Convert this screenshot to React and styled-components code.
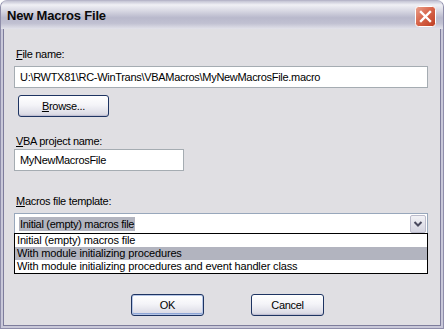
import React from 'react';
import styled, { createGlobalStyle } from 'styled-components';

const GlobalStyle = createGlobalStyle`
  body {
    margin: 0;
    background: #ffffff;
    font-family: "Liberation Sans", Arial, sans-serif;
  }
`;

const Window = styled.div`
  width: 444px;
  height: 329px;
  box-sizing: border-box;
  display: flex;
  flex-direction: column;
  background: #c9c8d9;
  border: 1px solid #8e8daa;
  border-top-color: #b7b6c9;
  border-radius: 7px 7px 0 0;
  overflow: hidden;
`;

const TitleBar = styled.div`
  height: 28px;
  flex: none;
  display: flex;
  align-items: center;
  justify-content: space-between;
  padding: 1px 6px 0 6px;
  box-sizing: border-box;
  background: linear-gradient(
    to bottom,
    #c4c4d4 0%,
    #f0f0f5 14%,
    #d8d8e3 35%,
    #b9b9cc 60%,
    #c1c1d2 80%,
    #e2e2ea 100%
  );
`;

const Title = styled.span`
  font-weight: bold;
  font-size: 13px;
  letter-spacing: -0.2px;
  color: #0a0a0a;
`;

const CloseButton = styled.div`
  width: 21px;
  height: 21px;
  margin-top: 2px;
  margin-right: 1px;
  display: flex;
`;

const Client = styled.div`
  flex: 1;
  margin: 0 2px 2px;
  border: 1px solid #7e7d9c;
  border-top: none;
  background: #e0dfe3;
  padding: 19px 10px 0;
  display: flex;
  flex-direction: column;
  font-size: 11px;
  letter-spacing: -0.3px;
  color: #000;
`;

const Label = styled.div`
  height: 13px;
  line-height: 13px;
  margin-top: ${p => p.$top || 0}px;
  margin-bottom: ${p => p.$gap}px;
  padding-left: 2px;
`;

const Key = styled.span`
  text-decoration: underline;
  text-underline-offset: 1px;
`;

const TextBox = styled.div`
  width: ${p => p.$width}px;
  height: 22px;
  box-sizing: border-box;
  border: 1px solid #a5acb2;
  background: #fff;
  padding-left: 5px;
  line-height: 20px;
  white-space: nowrap;
`;

const Button = styled.div`
  width: ${p => p.$width || 73}px;
  height: 22px;
  box-sizing: border-box;
  border: 1px solid #1e3462;
  border-radius: 3px;
  background: linear-gradient(to bottom, #ffffff 0%, #f4f4f8 45%, #dcdce6 90%, #c6c6d6 100%);
  box-shadow: ${p => p.$default
    ? 'inset 0 0 0 1px #b6c6e6, inset 0 -1px 0 1px #8ea6d6'
    : 'inset 0 -1px 0 #c0bfd2'};
  display: flex;
  align-items: center;
  justify-content: center;
  flex: none;
`;

const BrowseButton = styled(Button)`
  margin: 7px 0 0 4px;
`;

const ComboWrap = styled.div`
  position: relative;
  width: 414px;
`;

const Combo = styled.div`
  height: 21px;
  box-sizing: border-box;
  border: 1px solid #98a7bb;
  background: #fff;
  display: flex;
  align-items: center;
  justify-content: space-between;
  padding: 0 1px 0 4px;
`;

const Selected = styled.span`
  background: #b2b4bf;
  padding: 0 1px;
  line-height: 14px;
`;

const DropArrow = styled.div`
  width: 16px;
  height: 18px;
  box-sizing: border-box;
  border: 1px solid #bcbccc;
  border-radius: 2px;
  background: linear-gradient(to bottom, #f2f2f6, #d4d4e0);
  display: flex;
  align-items: center;
  justify-content: center;
`;

const DropList = styled.div`
  position: absolute;
  left: 0;
  right: 0;
  top: 20px;
  border: 1px solid #000;
  background: #fff;
  z-index: 2;
`;

const Option = styled.div`
  height: 13px;
  line-height: 13px;
  padding-left: 2px;
  letter-spacing: -0.15px;
  white-space: nowrap;
  background: ${p => (p.$active ? '#b2b4bf' : 'transparent')};
`;

const ButtonRow = styled.div`
  display: flex;
  gap: 47px;
  margin-top: 60px;
  padding-left: 117px;
`;

const options = [
  'Initial (empty) macros file',
  'With module initializing procedures',
  'With module initializing procedures and event handler class',
];

export default function App() {
  return (
    <>
      <GlobalStyle />
      <Window>
        <TitleBar>
          <Title>New Macros File</Title>
          <CloseButton>
            <svg width="21" height="21" viewBox="0 0 21 21">
              <defs>
                <linearGradient id="cl" x1="0" y1="0" x2="1" y2="1">
                  <stop offset="0" stopColor="#eaa38f" />
                  <stop offset="0.45" stopColor="#d8674d" />
                  <stop offset="1" stopColor="#bd3c22" />
                </linearGradient>
              </defs>
              <rect x="0.5" y="0.5" width="20" height="20" rx="3" fill="url(#cl)" stroke="#ffffff" />
              <path d="M6 6 L15 15 M15 6 L6 15" stroke="#ffffff" strokeWidth="2.4" strokeLinecap="square" />
            </svg>
          </CloseButton>
        </TitleBar>
        <Client>
          <Label $gap={5}><Key>F</Key>ile name:</Label>
          <TextBox $width={414}>U:\RWTX81\RC-WinTrans\VBAMacros\MyNewMacrosFile.macro</TextBox>
          <BrowseButton $width={91}><span><Key>B</Key>rowse...</span></BrowseButton>

          <Label $top={18} $gap={1}><Key>V</Key>BA project name:</Label>
          <TextBox $width={170}>MyNewMacrosFile</TextBox>

          <Label $top={24} $gap={5}><Key>M</Key>acros file template:</Label>
          <ComboWrap>
            <Combo>
              <Selected>Initial (empty) macros file</Selected>
              <DropArrow>
                <svg width="10" height="8" viewBox="0 0 10 8">
                  <polyline points="1.5,2 5,5.5 8.5,2" fill="none" stroke="#4a4a5e" strokeWidth="2" />
                </svg>
              </DropArrow>
            </Combo>
            <DropList>
              {options.map((o, i) => (
                <Option key={o} $active={i === 1}>{o}</Option>
              ))}
            </DropList>
          </ComboWrap>

          <ButtonRow>
            <Button $default>OK</Button>
            <Button>Cancel</Button>
          </ButtonRow>
        </Client>
      </Window>
    </>
  );
}
